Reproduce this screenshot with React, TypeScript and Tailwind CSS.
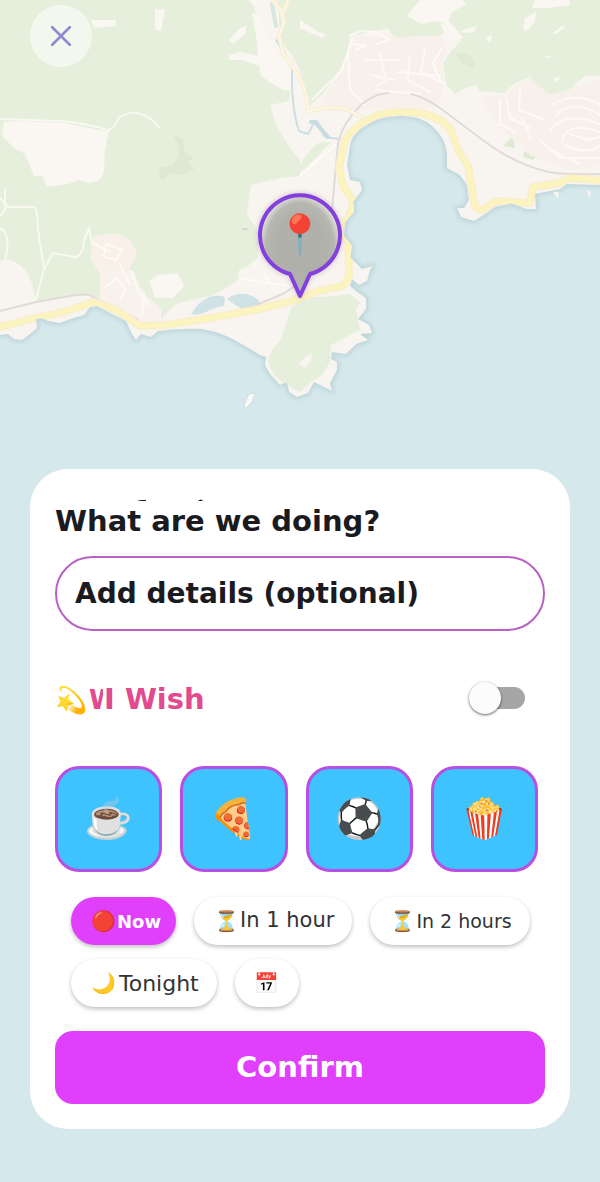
import { useState } from "react";

const COAST =
  "M0 335L8 334L14 339L22 340L30 334L37 328L36 319L42 318L48 321L60 323L70 319L84 315L90 307L97 306L112 314L126 321L132 334L136 340L141 334L151 337L158 331Q180 328 203 329Q225 333 245 346L260 355L266 357L265 365L270 374L280 385L287 382L289 392L297 397L308 393L314 382L322 386L332 391L330 383L337 370L337 362L331 359L332 352L346 354L356 344L368 340L360 334L372 333L369 325L358 319L366 309L366 298L357 292L350 286L352 279L359 285L367 281L370 270L373 266L362 269L350 257L352 246L344 236L345 222L354 212L353 202L362 190L360 182L350 180L347 165L350 145Q352 132 372 122Q382 116 400 116Q420 115 432 126Q446 138 447 154L447 168L460 175L467 185L469 200L464 208L457 208L461 217L474 221L485 214L495 207L512 203L526 209L536 209L535 194L560 189L567 184L600 185V0H0Z";

const MAIN_ROAD =
  "M0 327L35 318L60 313L94 302L116 310L140 326L165 325L210 318L255 310L295 300L318 291L342 286Q350 280 349 270L348 240L336 230L348 218L354 202L344 188L339 168L344 144Q348 130 370 119Q382 112 400 112Q425 111 440 120Q448 125 452 133L458 150L468 166L472 188L475 207L482 210L496 201L530 203L533 187L560 183L568 178L600 180";

const SIDE_ROAD =
  "M272 0L281 10L284 22L279 36L283 53L295 71Q307 86 308 112Q324 106 340 108Q352 110 365 120M284 12L288 0";

const MapView = () => (
  <svg
    viewBox="0 0 600 470"
    className="absolute inset-x-0 top-0 w-full"
    fill="none"
    strokeLinejoin="round"
    strokeLinecap="round"
    aria-label="Map"
  >
    <defs>
      <clipPath id="land">
        <path d={COAST} />
      </clipPath>
      <filter id="soft">
        <feGaussianBlur stdDeviation="2" />
      </filter>
      <radialGradient id="bubble">
        <stop offset="0.6" stopColor="#a9a9a4" />
        <stop offset="0.85" stopColor="#b0b1aa" />
        <stop offset="1" stopColor="#dcdcd6" />
      </radialGradient>
    </defs>

    {/* land */}
    <path d={COAST} stroke="#b9d2d7" strokeWidth="4" filter="url(#soft)" />
    <path d={COAST} fill="#f8f4ef" />
    <g clipPath="url(#land)">
      <path
        d="M0 0H252L255 12L257 45L262 66L278 86L290 91L289 101L270 105L276 125L290 148L300 160L300 176L280 178L251 185L247 214L258 232L258 258L248 266L239 270L238 280L223 290L210 296L195 299L176 304L161 319L161 309L151 300L141 291L134 272L118 263L99 298L85 295L60 298L36 303Q34 282 25 270Q16 260 8 260L0 261Z"
        fill="#e6efdb"
      />
      <path
        d="M278 0H600V76L585 76L575 84L566 95L545 94L533 86L531 76L515 83L504 93L480 91L476 85L464 89L455 94L446 84L443 63L452 50L462 40L450 34L448 28L440 36L416 36L395 40L388 28L370 32L350 36L347 54L337 75L322 95L307 108L300 70L292 55L280 40Z"
        fill="#e6efdb"
      />
      <path d="M300 165Q312 144 322 142H332Q322 150 309 166L300 172Z" fill="#e6efdb" />
      <path
        d="M287 320L281 340L272 350L268 362L274 374L283 383L300 392L310 383L322 375L330 362L331 345L346 337L360 330L356 310L360 302L350 294L325 297L306 297L291 308Z"
        fill="#e6efdb"
      />
      <path d="M299 364L304 358L312 353L311 361L304 368Z" fill="#f8f4ef" />
      {/* open ground */}
      <path
        d="M4 122L20 121L65 123L99 130L109 131L105 150L104 170Q102 182 90 183L78 180L68 184L47 187L42 176L34 176L29 164L25 154L14 148L2 136Z"
        fill="#faf6f2"
      />
      <path
        d="M91 20L116 20L116 26L94 28ZM155 9L165 10L161 31L155 30ZM229 40L240 28L247 25L245 34L233 44ZM248 0L257 0L255 7ZM149 281L158 275L178 273L184 286L173 298L155 298Z"
        fill="#faf6f2"
      />
      <path
        d="M252 12L260 18L267 38L280 56L292 68L293 86L286 91L272 84L261 76L259 66L243 60L229 60L229 55L240 52L258 56L256 36ZM410 12L420 0H463L466 4L452 12L448 24L436 21L422 24L407 16ZM535 0H569L570 5L548 8L532 8ZM525 18L536 12L535 22L527 31L523 29ZM460 31L477 26L474 32L464 33ZM552 34L563 25L564 28L556 34ZM553 78L562 77L555 82ZM540 56L550 56L550 58ZM486 37L492 35L490 44ZM300 20L315 30L326 35L322 38L300 28ZM440 24L450 22L464 38L448 40Z"
        fill="#faf6f2"
      />
      <path d="M93 237Q110 231 122 235L130 240L137 253L130 267L124 277L100 274L90 258Z" fill="#f8f0e9" />
      <path d="M100 270L132 272L145 295L160 308V322L140 324L100 298Z" fill="#f8f2ec" />
      <path
        d="M174 137Q179 134 183 141L185 153L193 158L188 162L194 170L183 175L170 173L163 180L158 176L160 167L172 166L178 157L179 146Z"
        fill="#dde9d2"
      />
      <path d="M455 53L467 54L475 61L474 69L462 63ZM503 146L513 136L515 148ZM524 151L536 157L533 160L523 157Z" fill="#dfead2" />
      <path
        d="M350 40L360 35L380 38L390 34L400 38L418 36L440 36L446 50L441 65L445 82L438 105L420 110L380 108L350 112L318 110L337 76L347 58Z"
        fill="#f8f1eb"
      />
      <path d="M480 98L505 94L530 78L550 95L600 80V165L570 170L530 155L500 128Z" fill="#f8f1eb" />

      {/* lagoons and streams */}
      <path
        d="M191 314Q198 302 209 297Q222 294 225 298L224 306Q215 307 206 312Q197 316 191 314ZM227 299Q234 293 246 294Q260 297 260 306Q252 311 242 309Q236 306 227 299Z"
        fill="#cfe3e7"
      />
      <path d="M276 40L284 52L292 69Q291 106 299 131L308 134L314 123L321 130L325 137L339 139" stroke="#cce0e3" strokeWidth="2" />
      <path d="M311 122L316 122L321 129L328 137" stroke="#c6dce0" strokeWidth="4" />
      <path d="M272 4L276 26" stroke="#d6e8df" strokeWidth="4" />

      {/* streets */}
      <g stroke="#fffefb" strokeWidth="2" strokeOpacity="0.7">
        <path d="M0 119L60 121Q85 123 108 130Q114 129 118 119Q124 112 138 113Q150 116 159 127M0 198L8 207L34 207Q38 210 38 230L44 269L53 253L75 257Q83 256 84 240L89 228L92 243L110 252M44 269L36 300M5 190L5 210L0 216M0 228Q12 234 5 260" />
        <path d="M350 35L362 31L376 32L390 40L377 44M348 55L350 90L365 105M352 40L342 70L312 100M366 60H400M370 75L396 80M376 90L420 94M410 55L408 80L430 92M425 50L421 72L445 84M442 48L433 63L440 80M355 50L366 46L352 44M398 72L440 76M380 54L386 80L376 86" />
        <path d="M500 100V124L515 132M506 96L510 118L530 128M520 90L519 110L545 120M530 138L522 118M552 105Q575 90 600 105M556 115Q574 98 600 115M550 132Q562 110 600 124M562 142Q566 120 600 132M565 145Q590 156 600 145M540 140L560 158H600M570 134L588 140L600 137M550 150L580 164" />
        <path d="M106 244L122 250L116 260L104 257ZM104 288L117 278L125 290L120 300M132 272L138 292L150 306M144 292L142 315M120 264L130 285M265 275L276 292M240 278L262 282L288 286M300 176L335 145M310 165L330 150" />
      </g>
      <path d="M243 229L247 229" stroke="#d3d8c8" strokeWidth="2" />

      {/* railway */}
      <path
        d="M0 311L36 302L70 296Q88 292 95 298L110 306L138 320M240 312L285 293L310 275L326 262L332 210L338 143Q343 122 362 104Q374 94 388 93M411 94Q424 97 440 108L480 138Q514 164 545 171Q558 175 600 174"
        stroke="#e0dbd9"
        strokeWidth="2"
      />

      {/* main roads */}
      <path d={SIDE_ROAD} stroke="#f7edd5" strokeWidth="4" />
      <path d={SIDE_ROAD} stroke="#fdf8e0" strokeWidth="2" />
      <path d={MAIN_ROAD} stroke="#f9eecd" strokeWidth="8" />
      <path d={MAIN_ROAD} stroke="#fcf4be" strokeWidth="5" />
    </g>
    <path d="M249 394L255 393L252 402L246 408L244 406Z" fill="#fbfaf7" stroke="#d0e0e2" />
    <path d="M553 192L559 192L558 199ZM587 190L591 192L589 198Z" fill="#f8f4ef" />

    {/* marker */}
    <path d="M290 274A40 40 0 1 1 310 274L300 296Z" stroke="#8a70a0" strokeOpacity="0.3" strokeWidth="6" filter="url(#soft)" />
    <path
      d="M290 274A40 40 0 1 1 310 274L300 296Z"
      fill="url(#bubble)"
      fillOpacity="0.9"
      stroke="#8440dd"
      strokeWidth="4"
    />
    <text x="300" y="249" fontSize="40" textAnchor="middle" fill="#000">
      📍
    </text>
  </svg>
);

const activities = [
  { name: "Coffee", icon: "☕\uFE0F" },
  { name: "Pizza", icon: "🍕" },
  { name: "Football", icon: "⚽" },
  { name: "Movie", icon: "🍿" },
];

const times = [
  { id: "now", icon: "🔴", label: "Now", text: "text-[18px]" },
  { id: "1h", icon: "⏳", label: "In 1 hour", text: "text-[21px]" },
  { id: "2h", icon: "⏳", label: "In 2 hours", text: "text-[19px]" },
  { id: "tonight", icon: "🌙", label: "Tonight", text: "gap-0.5 text-[22px]" },
  { id: "date", icon: "📅", label: "", text: "text-[22px]" },
];

const App = () => {
  const [details, setDetails] = useState("");
  const [wish, setWish] = useState(false);
  const [time, setTime] = useState("now");

  return (
    <main className="relative flex min-h-screen flex-col bg-[#d5e8eb] px-[30px] pt-[5px] pb-[53px] font-['DejaVu_Sans',sans-serif]">
      <MapView />

      <button
        aria-label="Close"
        className="relative flex size-[62px] items-center justify-center rounded-full bg-white/50"
      >
        <svg viewBox="0 0 20 20" className="size-5" stroke="#9088d0" strokeWidth="2.500" strokeLinecap="round">
          <path d="M1 1L19 19M19 1L1 19" />
        </svg>
      </button>

      <section className="relative mt-auto rounded-[38px] bg-white px-[25px] pt-[30px] pb-[25px]">
        {/* last line of the scrolled title */}
        <svg viewBox="0 0 490 3" className="h-[3px] w-full" fill="#1b1b1f" aria-hidden="true">
          <path d="M82 2L86 1L91 1V2ZM143 2Q146 -1 148 2Z" />
        </svg>
        <h1 className="text-[29px] leading-[38px] font-bold text-[#1b1b1f]">
          What are we doing?
        </h1>

        <input
          type="text"
          aria-label="Add details (optional)"
          placeholder="Add details (optional)"
          value={details}
          onChange={(e) => setDetails(e.target.value)}
          className="mt-4 block h-[75px] w-full rounded-full border-2 border-[#b860c4] px-[18px] text-[28px] font-bold text-[#1b1b1f] outline-none placeholder:text-[#1b1b1f] placeholder:opacity-100"
        />

        <div className="mt-[47px] flex h-10 items-center justify-between pr-5">
          <label htmlFor="wish" className="flex items-center pt-1 text-[29px] font-bold text-[#e2498f]">
            <span className="w-[34px] text-[26px]">💫</span>
            <span aria-hidden="true" className="w-[14px] overflow-hidden text-[26px]">
              W
            </span>
            <span className="pl-px">I Wish</span>
          </label>
          <input
            id="wish"
            type="checkbox"
            role="switch"
            checked={wish}
            onChange={(e) => setWish(e.target.checked)}
            className="flex h-[22px] w-[50px] appearance-none items-center rounded-full bg-[#a6a6a6] before:-ml-1.5 before:size-8 before:rounded-full before:bg-[#fcfcfc] before:shadow-sm before:shadow-black/50 checked:bg-[#e2498f] checked:before:ml-6"
          />
        </div>

        <div className="mt-[48px] grid grid-cols-4 gap-[18px] pr-[7px]">
          {activities.map((activity) => (
            <button
              key={activity.name}
              aria-label={activity.name}
              className="flex h-[106px] items-center justify-center rounded-[24px] border-3 border-[#b94fe2] bg-[#3fc3ff] text-[39px]"
            >
              {activity.icon}
            </button>
          ))}
        </div>

        <div className="mt-[25px] flex flex-wrap gap-x-[18px] gap-y-[14px] pl-4">
          {times.map((item) => (
            <button
              key={item.id}
              aria-label={item.label || "Pick a date"}
              onClick={() => setTime(item.id)}
              className={`flex h-12 items-center rounded-full shadow-[0_2px_4px_rgba(0,0,0,0.25)] ${item.text} ${
                time === item.id
                  ? "bg-[#e040fb] pr-[15px] pl-[18px] font-bold text-white"
                  : "bg-white px-[18px] text-[#333336]"
              }`}
            >
              <span className="w-7 text-center text-[20px]">{item.icon}</span>
              {item.label && <span>{item.label}</span>}
            </button>
          ))}
        </div>

        <button className="mt-6 h-[73px] w-full rounded-[18px] bg-[#e040fb] text-[29px] font-bold text-white">
          Confirm
        </button>
      </section>
    </main>
  );
};

export default App;
